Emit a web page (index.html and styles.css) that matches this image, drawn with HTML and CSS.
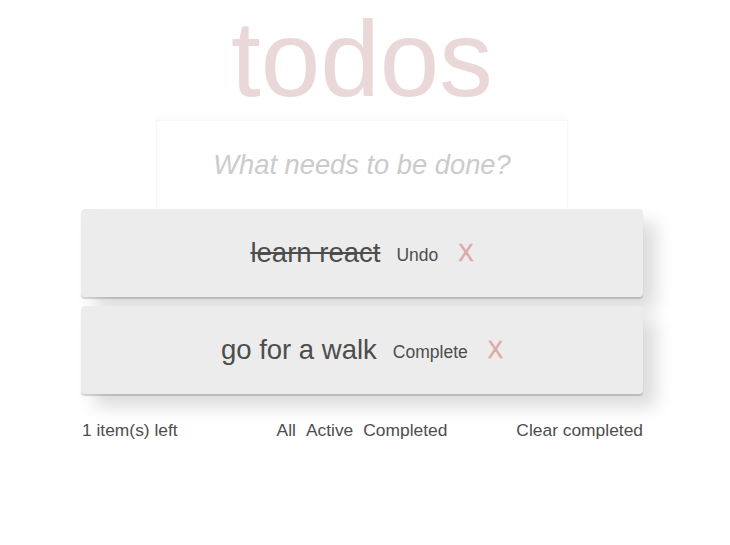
FILE: index.html
```html
<!DOCTYPE html>
<html lang="en">
<head>
<meta charset="utf-8">
<title>todos</title>
<link rel="stylesheet" href="styles.css">
</head>
<body>
<div class="app">
  <h1 class="title">todos</h1>
  <input class="new-todo" type="text" placeholder="What needs to be done?">
  <ul class="todo-list">
    <li class="todo">
      <span class="todo-text done">learn react</span>
      <button class="toggle">Undo</button>
      <button class="remove">X</button>
    </li>
    <li class="todo">
      <span class="todo-text">go for a walk</span>
      <button class="toggle">Complete</button>
      <button class="remove">X</button>
    </li>
  </ul>
  <footer class="footer">
    <span class="count">1 item(s) left</span>
    <nav class="filters">
      <a class="filter">All</a>
      <a class="filter">Active</a>
      <a class="filter">Completed</a>
    </nav>
    <a class="clear">Clear completed</a>
  </footer>
</div>
</body>
</html>
```
FILE: styles.css
```css
* { box-sizing: border-box; }
body {
  margin: 0;
  background: #ffffff;
  font-family: "Liberation Sans", Arial, sans-serif;
  color: #4d4d4d;
}
.app {
  width: 562px;
  margin-left: 81px;
}
.title {
  margin: 0;
  padding: 0;
  font-size: 107px;
  line-height: 118px;
  font-weight: normal;
  text-align: center;
  color: #ead7d8;
}
.new-todo {
  display: block;
  width: 412px;
  height: 88px;
  margin: 2px auto 0;
  padding: 0;
  border: 1px solid #f7f7f7;
  border-bottom: none;
  outline: none;
  background: #fff;
  font-family: "Liberation Sans", Arial, sans-serif;
  font-style: italic;
  font-size: 27.3px;
  text-align: center;
  color: #4d4d4d;
  box-shadow: 0 -3px 6px rgba(0,0,0,0.025);
}
.new-todo::placeholder {
  color: #cbcbcb;
}
.todo-list {
  list-style: none;
  margin: 1px 0 0;
  padding: 0;
  display: flex;
  flex-direction: column;
  gap: 9px;
}
.todo {
  height: 88px;
  background: #ececec;
  border-radius: 4px;
  display: flex;
  align-items: center;
  justify-content: center;
  box-shadow: 0 2px 1px rgba(0,0,0,0.16), 13px 13px 18px rgba(0,0,0,0.14);
}
.todo-text {
  font-size: 27.5px;
  color: #4d4d4d;
}
.todo-text.done {
  text-decoration: line-through;
}
.toggle, .remove {
  border: none;
  background: none;
  padding: 0;
  font-family: "Liberation Sans", Arial, sans-serif;
  color: #4d4d4d;
  cursor: pointer;
}
.toggle {
  font-size: 17.5px;
  margin-left: 16px;
  position: relative;
  top: 2px;
}
.remove {
  font-size: 23px;
  margin-left: 20px;
  color: #dfa6a6;
  -webkit-text-stroke: 0.4px #dfa6a6;
}
.footer {
  margin-top: 26px;
  display: grid;
  grid-template-columns: 1fr auto 1fr;
  align-items: center;
  font-size: 17.4px;
  line-height: 20px;
  color: #4d4d4d;
}
.count { padding-left: 1px; }
.filters {
  display: flex;
  gap: 10px;
}
.clear { justify-self: end; }
```
